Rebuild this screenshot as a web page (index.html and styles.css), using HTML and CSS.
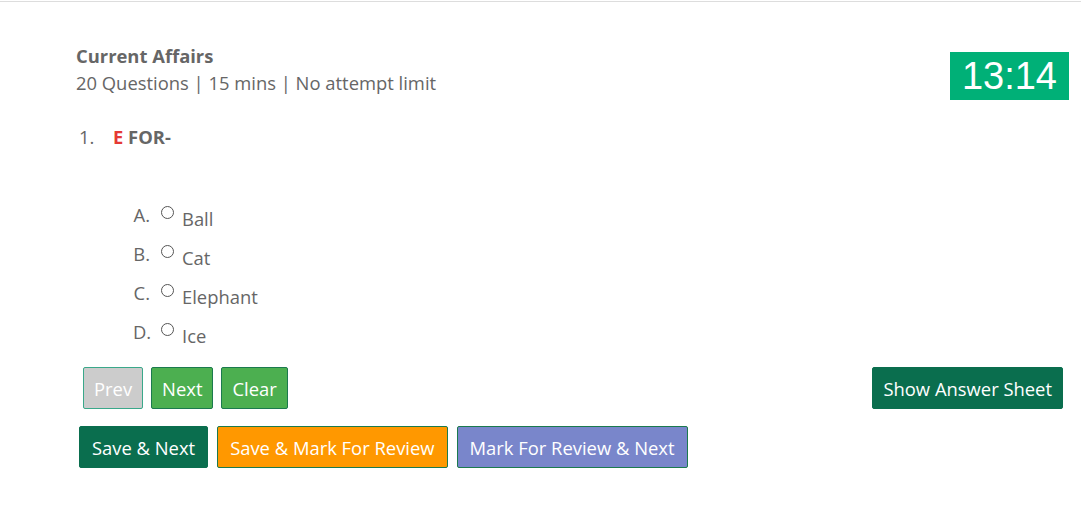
FILE: index.html
```html
<!DOCTYPE html>
<html lang="en">

<head>
    <meta charset="UTF-8">
    <title>Quiz</title>
    <link rel="stylesheet" href="styles.css">
</head>

<body>
    <div class="topLine"></div>
    <div class="quiz">
        <div class="header">
            <div>
                <div class="title">Current Affairs</div>
                <div class="meta">20 Questions | 15 mins | No attempt limit</div>
            </div>
            <div class="timer">13:14</div>
        </div>

        <div class="question">
            <span class="qnum">1.</span>
            <span class="qtext"><span class="red">E</span> FOR-</span>
        </div>

        <div class="options">
            <label class="option"><span class="letter">A.</span><span class="radio"></span><span>Ball</span></label>
            <label class="option"><span class="letter">B.</span><span class="radio"></span><span>Cat</span></label>
            <label class="option"><span class="letter">C.</span><span class="radio"></span><span>Elephant</span></label>
            <label class="option"><span class="letter">D.</span><span class="radio"></span><span>Ice</span></label>
        </div>

        <div class="navRow">
            <div class="navLeft">
                <button class="btn prev">Prev</button>
                <button class="btn green">Next</button>
                <button class="btn green">Clear</button>
            </div>
            <button class="btn dark">Show Answer Sheet</button>
        </div>

        <div class="actionRow">
            <button class="btn dark">Save &amp; Next</button>
            <button class="btn orange">Save &amp; Mark For Review</button>
            <button class="btn purple">Mark For Review &amp; Next</button>
        </div>
    </div>
</body>

</html>
```
FILE: styles.css
```css
body {
    margin: 0;
    background-color: #fff;
    font-family: "Open Sans", sans-serif;
    color: #666;
}

.topLine {
    height: 1px;
    margin-top: 1px;
    background-color: #ddd;
}

.quiz {
    padding: 41px 18px 0 76px;
}

.header {
    display: flex;
    justify-content: space-between;
    align-items: flex-start;
}

.title {
    font-size: 18.4px;
    font-weight: 700;
    line-height: 26px;
}

.meta {
    font-size: 18.4px;
    line-height: 28px;
}

.timer {
    margin-top: 9px;
    margin-right: -6px;
    background-color: #00b077;
    color: #fff;
    font-family: "Liberation Sans", Arial, sans-serif;
    font-size: 38px;
    line-height: 48px;
    padding: 0 12px;
}

.question {
    display: flex;
    font-size: 18.4px;
    line-height: 26px;
    margin-top: 24px;
    padding-left: 3px;
}

.qnum {
    width: 34px;
}

.qtext {
    font-weight: 700;
}

.red {
    color: #e53935;
}

.options {
    margin-top: 52px;
    padding-left: 57px;
    display: flex;
    flex-direction: column;
    gap: 9px;
}

.option {
    display: flex;
    align-items: flex-start;
    font-size: 18.4px;
    line-height: 26px;
}

.letter {
    width: 17px;
    text-align: right;
    margin-right: 11px;
}

.radio {
    width: 13px;
    height: 13px;
    border: 1px solid #555;
    border-radius: 50%;
    margin-top: 4px;
    margin-right: 8px;
    box-sizing: border-box;
}

.option span:last-child {
    margin-top: 4px;
}

.navRow {
    display: flex;
    justify-content: space-between;
    margin-top: 18px;
    padding-left: 7px;
}

.navLeft {
    display: flex;
    gap: 8px;
}

.actionRow {
    display: flex;
    gap: 9px;
    margin-top: 17px;
    padding-left: 3px;
}

.btn {
    font-family: "Open Sans", sans-serif;
    font-size: 18.4px;
    height: 42px;
    padding: 0 10px;
    border: 1px solid #1b7a4e;
    border-radius: 2px;
    color: #fff;
    cursor: pointer;
}

.actionRow .btn {
    padding: 0 12px;
}

.prev {
    background-color: #ccc;
    border-color: #3aa88a;
}

.green {
    background-color: #4caf50;
}

.dark {
    background-color: #0a6e4e;
    border-color: #0a6e4e;
}

.orange {
    background-color: #ff9800;
}

.purple {
    background-color: #7986cb;
}
```
